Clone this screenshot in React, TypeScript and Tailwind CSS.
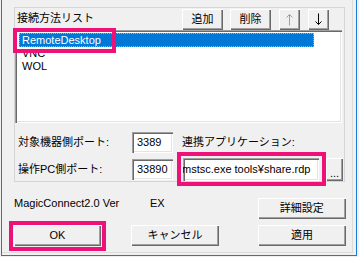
import React from "react";

const raised =
  "bg-[#f0f0f0] shadow-[inset_1px_1px_0_#ffffff,inset_-1px_-1px_0_#696969,inset_-2px_-2px_0_#a0a0a0]";
const sunken =
  "bg-white shadow-[inset_1px_1px_0_#a0a0a0,inset_2px_2px_0_#696969,inset_-1px_-1px_0_#ffffff,inset_-2px_-2px_0_#e3e3e3]";

function Btn({ children, className }: { children: React.ReactNode; className: string }) {
  return (
    <div className={`flex shrink-0 items-center justify-center ${raised} ${className}`}>{children}</div>
  );
}

function Arrow({ up, color }: { up?: boolean; color: string }) {
  return (
    <svg width="9" height="13" viewBox="0 0 9 13" className={up ? "" : "rotate-180"}>
      <path d="M4.5 1.5V12.5" stroke={color} strokeWidth="1" fill="none" />
      <path d="M1.5 4.5L4.5 1.5L7.5 4.5" stroke={color} strokeWidth="1" fill="none" />
    </svg>
  );
}

export default function App() {
  return (
    <div className="relative h-[257px] w-[359px] overflow-hidden bg-[#f0f0f0] font-['Liberation_Sans','Noto_Sans_CJK_JP',sans-serif] text-[11px] leading-[13px] text-black">
      <div className="ml-[1px] h-[256px] w-[356px] border-b border-l border-r border-[#1a7bd0]">
        <div className="flex h-[253px] w-[351px] flex-col border-b border-r border-[#dcdcdc]">
          {/* group frame */}
          <div className="ml-[12px] mt-[7px] flex h-[175px] w-[331px] flex-col border border-[#d5d5d5]">
            <div className="flex h-[22px] items-start">
              <span className="ml-[2px] mt-[4px]">接続方法リスト</span>
              <Btn className="ml-[88px] mt-[1px] h-[21px] w-[41px]">追加</Btn>
              <Btn className="ml-[7px] mt-[1px] h-[21px] w-[41px]">削除</Btn>
              <Btn className="ml-[8px] mt-[1px] h-[21px] w-[21px]">
                <Arrow up color="#a0a0a0" />
              </Btn>
              <Btn className="ml-[8px] mt-[1px] h-[21px] w-[21px]">
                <Arrow color="#000000" />
              </Btn>
            </div>
            <div className={`h-[93px] w-[327px] ${sunken} flex flex-col pl-[4px] pt-[3px]`}>
              <div className="h-[14px] w-[295px] border border-dotted border-[#ff9c3a] bg-[#0078d7] pl-[2px] leading-[12px] text-white">
                RemoteDesktop
              </div>
              <div className="h-[13px] pl-[3px]">VNC</div>
              <div className="h-[13px] pl-[3px]">WOL</div>
            </div>
            <div className="mt-[9px] flex h-[21px] items-center">
              <span className="ml-[3px] w-[114px]">対象機器側ポート:</span>
              <div className={`h-[21px] w-[41px] ${sunken} flex items-center pl-[5px]`}>3389</div>
              <span className="ml-[9px]">連携アプリケーション:</span>
            </div>
            <div className="mt-[5px] flex h-[23px] items-center">
              <span className="ml-[3px] w-[114px]">操作PC側ポート:</span>
              <div className={`h-[21px] w-[41px] ${sunken} flex items-center pl-[5px]`}>33890</div>
              <div className={`ml-[10px] h-[23px] w-[136px] ${sunken} flex items-center overflow-hidden whitespace-nowrap pl-[1px]`}>
                <span className="-ml-[2px]">mstsc.exe tools¥share.rdp</span>
              </div>
              <Btn className="ml-[7px] h-[23px] w-[17px] items-end pb-[4px] leading-[8px]">...</Btn>
            </div>
          </div>
          {/* bottom area */}
          <div className="mt-[14px] flex h-[23px] items-start">
            <span className="ml-[12px] mt-[1px] w-[136px]">MagicConnect2.0 Ver</span>
            <span className="mt-[1px]">EX</span>
            <Btn className="ml-[93px] mt-[2px] h-[21px] w-[88px]">詳細設定</Btn>
          </div>
          <div className="mt-[6px] flex h-[21px]">
            <Btn className="ml-[12px] h-[21px] w-[87px]">OK</Btn>
            <Btn className="ml-[30px] h-[21px] w-[88px]">キャンセル</Btn>
            <Btn className="ml-[39px] h-[21px] w-[88px]">適用</Btn>
          </div>
        </div>
      </div>
      {/* pink annotation boxes */}
      <div className="absolute left-[13px] top-[28px] h-[25px] w-[103px] border-4 border-[#ee1177]" />
      <div className="absolute left-[177px] top-[152px] h-[34px] w-[149px] border-4 border-[#ee1177]" />
      <div className="absolute left-[9px] top-[221px] h-[30px] w-[97px] border-4 border-[#ee1177]" />
    </div>
  );
}
